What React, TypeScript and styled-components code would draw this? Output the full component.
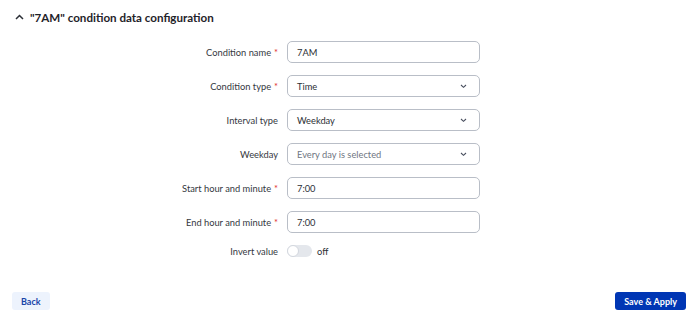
import React from 'react';
import styled, { createGlobalStyle } from 'styled-components';

const GlobalStyle = createGlobalStyle`
  html, body {
    margin: 0;
    padding: 0;
    background: #ffffff;
  }
  body {
    font-family: Lato, "Open Sans", "Liberation Sans", sans-serif;
    color: #2b2f36;
  }
`;

const Page = styled.div`
  width: 690px;
  height: 325px;
  display: flex;
  flex-direction: column;
  box-sizing: border-box;
  overflow: hidden;
`;

const Header = styled.div`
  display: flex;
  align-items: center;
  gap: 6px;
  height: 18px;
  padding: 8px 0 0 15px;
`;

const Title = styled.h2`
  margin: 0;
  font-size: 11.6px;
  font-weight: 700;
  color: #1f2329;
`;

const Form = styled.div`
  display: flex;
  flex-direction: column;
  gap: 12px;
  padding-top: 15px;
`;

const Row = styled.div<{ $short?: boolean }>`
  display: flex;
  align-items: center;
  height: ${p => (p.$short ? '12px' : '22px')};
`;

const Label = styled.label`
  width: 278px;
  padding-right: 9px;
  box-sizing: content-box;
  text-align: right;
  font-size: 9.3px;
  color: #34383e;
  white-space: nowrap;
`;

const Req = styled.span`
  color: #e2342f;
  margin-left: 3px;
`;

const Field = styled.div<{ $muted?: boolean }>`
  width: 193px;
  height: 22px;
  box-sizing: border-box;
  border: 1px solid #b9bec7;
  border-radius: 5px;
  display: flex;
  align-items: center;
  justify-content: space-between;
  padding: 0 11px 0 9px;
  font-size: 9.3px;
  color: ${p => (p.$muted ? '#6f7682' : '#2b2f36')};
`;

const Toggle = styled.div`
  width: 25px;
  height: 12px;
  border-radius: 6px;
  background: #e4e7ec;
  position: relative;
  &::after {
    content: '';
    position: absolute;
    left: 0;
    top: 0;
    width: 12px;
    height: 12px;
    box-sizing: border-box;
    border-radius: 50%;
    background: #ffffff;
    border: 1px solid #d3d7de;
  }
`;

const ToggleWrap = styled.div`
  display: flex;
  align-items: center;
  gap: 5px;
  font-size: 9.3px;
  color: #2b2f36;
`;

const Footer = styled.div`
  margin-top: auto;
  display: flex;
  justify-content: space-between;
  padding: 0 4px 15px 12px;
`;

const Button = styled.button<{ $primary?: boolean }>`
  height: 18px;
  border: none;
  border-radius: 3px;
  padding: 0 9px;
  font-family: Lato, "Open Sans", sans-serif;
  font-size: 9px;
  font-weight: 700;
  background: ${p => (p.$primary ? '#0036b4' : '#edf3fd')};
  color: ${p => (p.$primary ? '#ffffff' : '#1a45a8')};
`;

function Chevron({ up }: { up?: boolean }) {
  return (
    <svg width="9" height="6" viewBox="0 0 9 6">
      <path
        d={up ? 'M1 5 L4.5 1.5 L8 5' : 'M2 2 L4.5 4.3 L7 2'}
        fill="none"
        stroke={up ? '#2b2f36' : '#4a5060'}
        strokeWidth={up ? 1.5 : 1.1}
      />
    </svg>
  );
}

const fields: { label: string; value: string; required?: boolean; select?: boolean; muted?: boolean }[] = [
  { label: 'Condition name', value: '7AM', required: true },
  { label: 'Condition type', value: 'Time', required: true, select: true },
  { label: 'Interval type', value: 'Weekday', select: true },
  { label: 'Weekday', value: 'Every day is selected', select: true, muted: true },
  { label: 'Start hour and minute', value: '7:00', required: true },
  { label: 'End hour and minute', value: '7:00', required: true },
];

export default function App() {
  return (
    <Page>
      <GlobalStyle />
      <Header>
        <Chevron up />
        <Title>"7AM" condition data configuration</Title>
      </Header>
      <Form>
        {fields.map(f => (
          <Row key={f.label}>
            <Label>
              {f.label}
              {f.required && <Req>*</Req>}
            </Label>
            <Field $muted={f.muted}>
              <span>{f.value}</span>
              {f.select && <Chevron />}
            </Field>
          </Row>
        ))}
        <Row $short>
          <Label>Invert value</Label>
          <ToggleWrap>
            <Toggle />
            off
          </ToggleWrap>
        </Row>
      </Form>
      <Footer>
        <Button>Back</Button>
        <Button $primary>Save &amp; Apply</Button>
      </Footer>
    </Page>
  );
}
